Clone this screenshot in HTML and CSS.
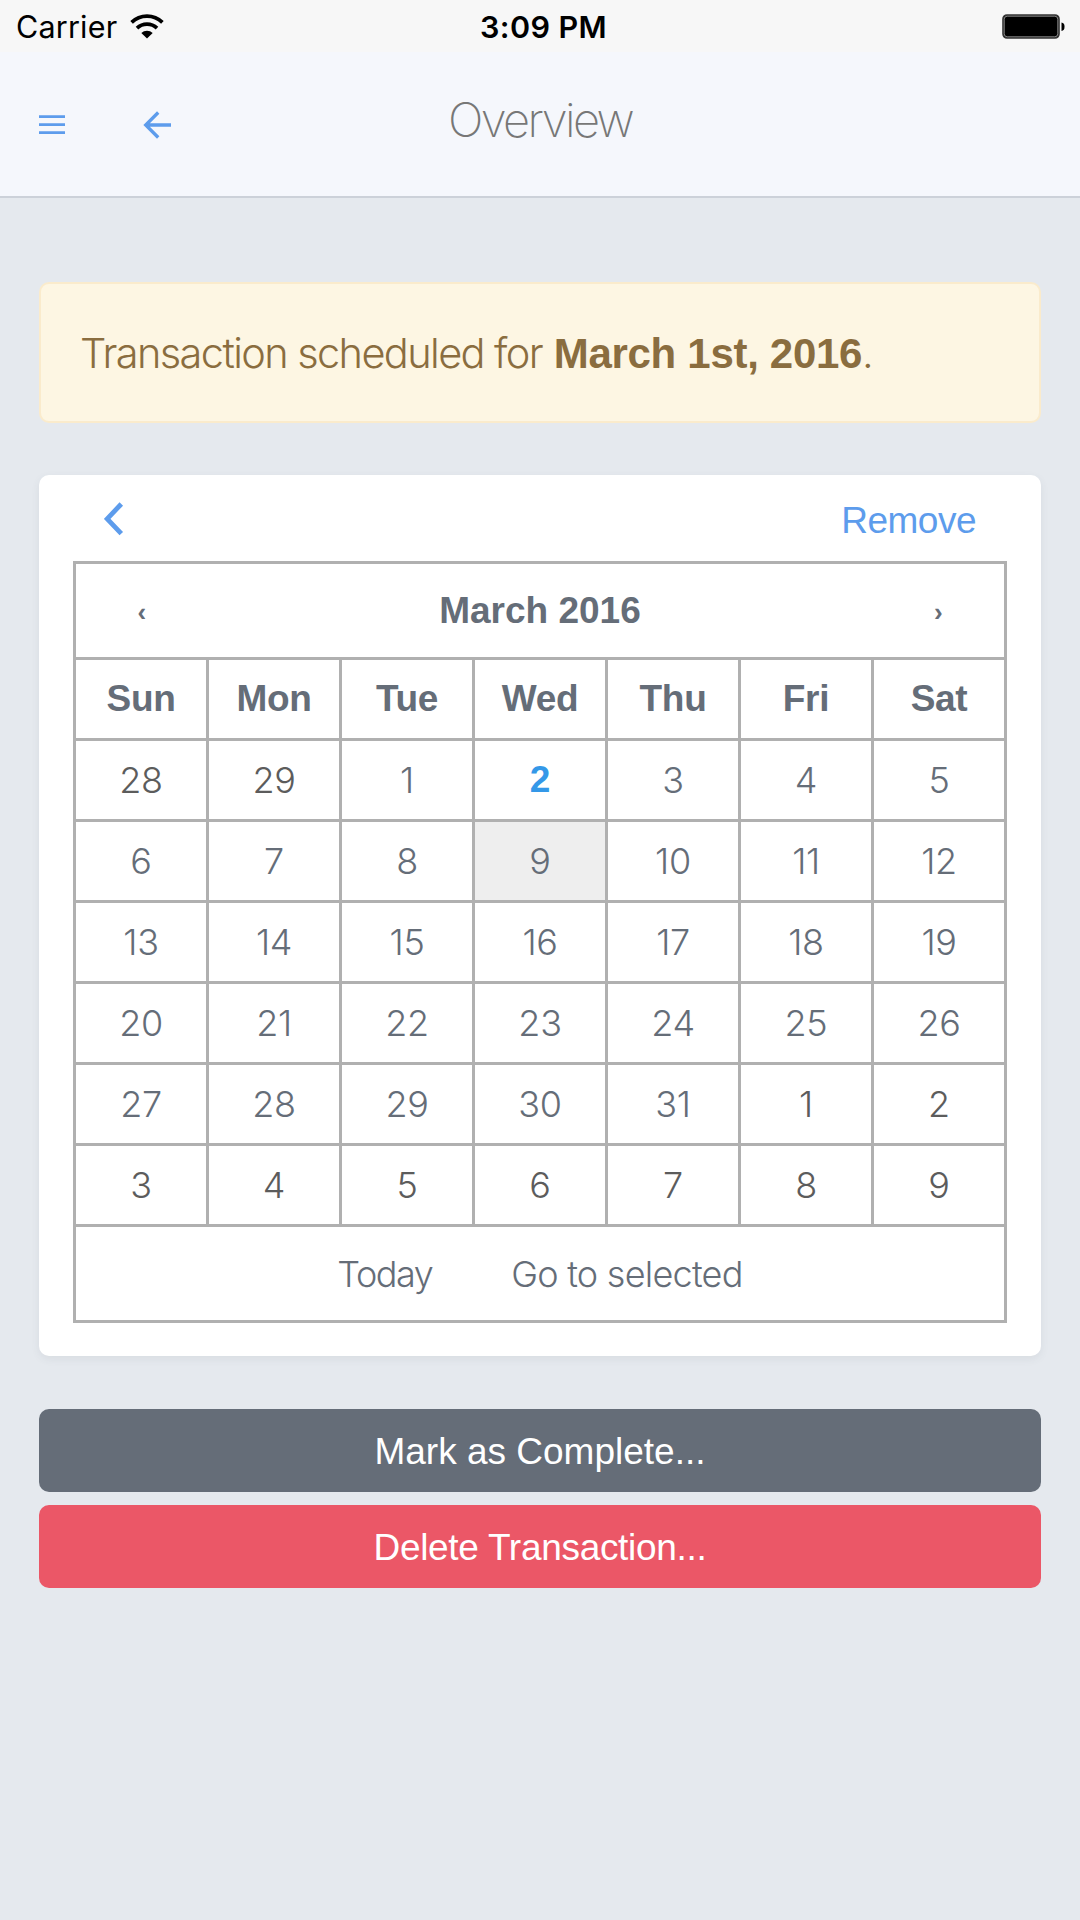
FILE: index.html
```html
<!DOCTYPE html>
<html lang="en">
  <head>
    <meta charset="utf-8">
    <title>Overview</title>
    <link rel="stylesheet" href="styles.css">
  </head>
  <body>
    <div class="status-bar">
      <div class="carrier">
        <span>Carrier</span>
        <svg class="wifi" width="34" height="25" viewBox="0 -1 34 25">
          <g fill="none" stroke="#000" stroke-width="3.7">
            <path d="M1.6 7.4 A22 22 0 0 1 32.4 7.4" />
            <path d="M7 13.2 A14.5 14.5 0 0 1 27 13.2" />
          </g>
          <path d="M11.3 18 A8.5 8.5 0 0 1 22.7 18 L17 23.5 Z" />
        </svg>
      </div>
      <div class="time">3:09 PM</div>
      <svg class="battery" width="64" height="26" viewBox="0 0 64 26">
        <rect x="1" y="1" width="56" height="23" rx="4" fill="#000" stroke="#333" stroke-width="1.6" />
        <rect x="2.2" y="2.2" width="53.6" height="20.6" rx="3" fill="none" stroke="#aaa" stroke-width="0.8" />
        <path d="M59.5 8.5 A3.6 4.3 0 0 1 59.5 17 Z" />
      </svg>
    </div>

    <header class="bar">
      <nav class="bar-buttons">
        <a class="menu">
          <svg width="26" height="20" viewBox="0 0 26 20">
            <path d="M0 1.7 H26 M0 9.7 H26 M0 17.7 H26" stroke="#5d9cec" stroke-width="2.7" />
          </svg>
        </a>
        <a class="back">
          <svg width="29" height="28" viewBox="0 0 29 28">
            <path d="M28 14 H3 M15.2 1.5 L2.7 14 L15.2 26.5" fill="none" stroke="#5d9cec" stroke-width="3.3" />
          </svg>
        </a>
      </nav>
      <h1>Overview</h1>
      <div class="bar-buttons"></div>
    </header>

    <main class="content">
      <div class="alert">
        <p><span class="alert-text">Transaction scheduled for</span> <strong>March 1st, 2016</strong>.</p>
      </div>

      <section class="card">
        <div class="card-head">
          <svg width="20" height="34" viewBox="0 0 20 34">
            <path d="M17.3 2 L3.2 16.8 L17.3 31.6" fill="none" stroke="#5d9cec" stroke-width="4.8" />
          </svg>
          <a class="remove">Remove</a>
        </div>
        <table class="calendar">
          <thead>
            <tr class="month">
              <th class="prev">‹</th>
              <th class="title" colspan="5">March 2016</th>
              <th class="next">›</th>
            </tr>
            <tr class="weekdays">
              <th>Sun</th><th>Mon</th><th>Tue</th><th>Wed</th><th>Thu</th><th>Fri</th><th>Sat</th>
            </tr>
          </thead>
          <tbody>
            <tr>
              <td class="other">28</td><td class="other">29</td><td>1</td><td class="today">2</td><td>3</td><td>4</td><td>5</td>
            </tr>
            <tr>
              <td>6</td><td>7</td><td>8</td><td class="selected">9</td><td>10</td><td>11</td><td>12</td>
            </tr>
            <tr>
              <td>13</td><td>14</td><td>15</td><td>16</td><td>17</td><td>18</td><td>19</td>
            </tr>
            <tr>
              <td>20</td><td>21</td><td>22</td><td>23</td><td>24</td><td>25</td><td>26</td>
            </tr>
            <tr>
              <td>27</td><td>28</td><td>29</td><td>30</td><td>31</td><td class="other">1</td><td class="other">2</td>
            </tr>
            <tr>
              <td class="other">3</td><td class="other">4</td><td class="other">5</td><td class="other">6</td><td class="other">7</td><td class="other">8</td><td class="other">9</td>
            </tr>
          </tbody>
          <tfoot>
            <tr>
              <td colspan="7">
                <div class="links">
                  <a class="link-today">Today</a>
                  <a class="link-selected">Go to selected</a>
                </div>
              </td>
            </tr>
          </tfoot>
        </table>
      </section>

      <div class="actions">
        <button class="btn btn-dark">Mark as Complete...</button>
        <button class="btn btn-danger">Delete Transaction...</button>
      </div>
    </main>
  </body>
</html>
```
FILE: styles.css
```css
* {
  box-sizing: border-box;
}
body {
  margin: 0;
  min-height: 1920px;
  background-color: #e5e9ee;
  color: #656d78;
  font-family: Inter, "Liberation Sans", sans-serif;
  font-size: 36px;
  font-weight: 300;
}

/* status bar */
.status-bar {
  display: grid;
  grid-template-columns: 1fr auto 1fr;
  align-items: center;
  height: 52px;
  padding: 1px 14px 0 16px;
  background-color: #f7f7f7;
  color: #000;
  font-size: 30.5px;
  font-weight: 400;
}
.carrier {
  display: flex;
  align-items: center;
  gap: 13px;
  letter-spacing: 0.2px;
}
.wifi {
  margin-bottom: 1px;
}
.time {
  margin-left: 5px;
  font-weight: 600;
  letter-spacing: 0.4px;
}
.battery {
  justify-self: end;
}

/* header */
.bar {
  display: grid;
  grid-template-columns: 1fr auto 1fr;
  align-items: center;
  height: 146px;
  padding: 1px 39px 0;
  background-color: #f5f7fc;
  border-bottom: 2px solid #ccd1d9;
}
.bar-buttons {
  display: flex;
  align-items: center;
  gap: 78px;
}
.bar-buttons svg {
  display: block;
}
.bar h1 {
  margin: 0;
  padding-bottom: 11px;
  color: #777;
  font-size: 47px;
  font-weight: 250;
  letter-spacing: -2.6px;
}

.content {
  padding: 84px 39px 0;
}

.alert {
  display: flex;
  align-items: center;
  height: 141px;
  padding: 0 39px;
  border: 2px solid #faebcc;
  border-radius: 10px;
  background-color: #fdf6e3;
  color: #8a6d3f;
  font-size: 41.5px;
}
.alert p {
  margin: 0;
}
.alert-text {
  letter-spacing: -1.6px;
}
.alert strong {
  font-family: "Liberation Sans", sans-serif;
  font-size: 42px;
  font-weight: bold;
  letter-spacing: -0.3px;
}

/* calendar card */
.card {
  margin-top: 52px;
  height: 881px;
  padding: 0 34px;
  border-radius: 10px;
  background-color: #fff;
  box-shadow: 0 3px 8px rgba(67, 74, 84, 0.08);
}
.card-head {
  display: flex;
  justify-content: space-between;
  align-items: center;
  height: 86px;
  padding: 1px 31px 0;
}
.remove {
  padding-top: 4px;
  color: #5d9cec;
  font-family: "Liberation Sans", sans-serif;
  font-size: 37px;
  font-weight: normal;
  letter-spacing: -0.5px;
}
.calendar {
  width: 934px;
  table-layout: fixed;
  border-collapse: collapse;
  text-align: center;
}
.calendar th,
.calendar td {
  height: 81px;
  padding: 0;
  border: 3px solid #b0b0b0;
  line-height: 44px;
}
.calendar th {
  font-family: "Liberation Sans", sans-serif;
  font-size: 37px;
  font-weight: bold;
}
.calendar td {
  letter-spacing: -0.3px;
}
.calendar .month th {
  height: 96px;
  padding-top: 1px;
}
.calendar .month .title {
  border-left: none;
  border-right: none;
}
.calendar .month .prev,
.calendar .month .next {
  padding-top: 3px;
  font-size: 26px;
}
.calendar .month .prev {
  border-right: none;
}
.calendar .month .next {
  border-left: none;
}
.calendar .weekdays th {
  letter-spacing: -0.3px;
}
.calendar .other {
  color: #5c5c5c;
}
.calendar .today {
  color: #3498e8;
  font-family: "Liberation Sans", sans-serif;
  font-size: 37px;
  font-weight: bold;
}
.calendar .selected {
  background-color: #eee;
}
.calendar tfoot td {
  height: 96px;
}
.links {
  display: flex;
  justify-content: center;
  gap: 79px;
}
.link-today {
  letter-spacing: -1.5px;
}
.link-selected {
  letter-spacing: -0.75px;
}

/* buttons */
.actions {
  display: flex;
  flex-direction: column;
  gap: 13px;
  margin-top: 53px;
}
.btn {
  height: 83px;
  padding: 2px 0 0;
  border: none;
  border-radius: 10px;
  color: #fff;
  font-family: "Liberation Sans", sans-serif;
  font-size: 37px;
}
.btn-dark {
  background-color: #656d78;
}
.btn-danger {
  background-color: #eb5767;
  letter-spacing: -0.3px;
}
```
